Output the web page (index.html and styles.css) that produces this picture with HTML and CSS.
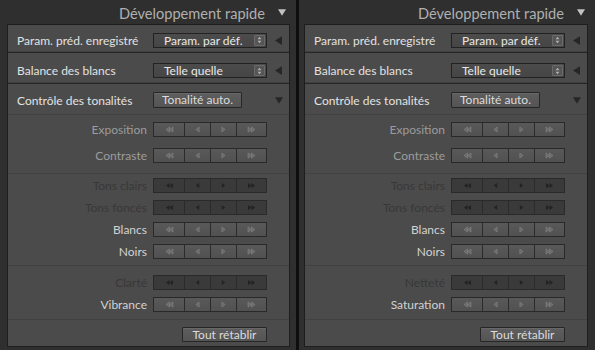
FILE: index.html
```html
<!DOCTYPE html>
<html lang="fr">
<head>
<meta charset="utf-8">
<title>Développement rapide</title>
<link rel="stylesheet" href="styles.css">
</head>
<body>
<svg width="0" height="0" class="defs">
  <defs>
    <symbol id="l1" viewBox="0 0 6 8"><path d="M5 1 L1 4 L5 7 Z"/></symbol>
    <symbol id="r1" viewBox="0 0 6 8"><path d="M1 1 L5 4 L1 7 Z"/></symbol>
    <symbol id="l2" viewBox="0 0 10 8"><path d="M5 1 L1 4 L5 7 Z M9 1 L5 4 L9 7 Z"/></symbol>
    <symbol id="r2" viewBox="0 0 10 8"><path d="M1 1 L5 4 L1 7 Z M5 1 L9 4 L5 7 Z"/></symbol>
  </defs>
</svg>
<div class="screens">

  <section class="screen">
    <div class="hdr"><span class="hdr-title">Développement rapide</span><svg class="tri-down light" viewBox="0 0 10 8"><path d="M0 0 H10 L5 8 Z"/></svg></div>
    <div class="panel">
      <div class="row row-preset">
        <span class="lbl">Param. préd. enregistré</span>
        <div class="select"><span class="sel-text">Param. par déf.</span><span class="stepper"><svg viewBox="0 0 6 10"><path d="M3 1 L5.5 4 H0.5 Z M3 9 L5.5 6 H0.5 Z"/></svg></span></div>
        <svg class="tri-left" viewBox="0 0 8 10"><path d="M8 0 V10 L0 5 Z"/></svg>
      </div>
      <div class="row row-wb">
        <span class="lbl">Balance des blancs</span>
        <div class="select"><span class="sel-text">Telle quelle</span><span class="stepper"><svg viewBox="0 0 6 10"><path d="M3 1 L5.5 4 H0.5 Z M3 9 L5.5 6 H0.5 Z"/></svg></span></div>
        <svg class="tri-left" viewBox="0 0 8 10"><path d="M8 0 V10 L0 5 Z"/></svg>
      </div>
      <div class="tone">
        <div class="tone-head">
          <span class="lbl">Contrôle des tonalités</span>
          <button class="btn btn-auto">Tonalité auto.</button>
          <svg class="tri-down dark" viewBox="0 0 10 8"><path d="M0 0 H10 L5 8 Z"/></svg>
        </div>
        <div class="grp grp-1">
          <div class="srow"><span class="slbl mid">Exposition</span><div class="steps"><span class="seg s-w"><svg class="g2"><use href="#l2"/></svg></span><span class="seg s-n"><svg class="g1"><use href="#l1"/></svg></span><span class="seg s-n"><svg class="g1"><use href="#r1"/></svg></span><span class="seg s-w"><svg class="g2"><use href="#r2"/></svg></span></div></div>
          <div class="srow"><span class="slbl mid">Contraste</span><div class="steps"><span class="seg s-w"><svg class="g2"><use href="#l2"/></svg></span><span class="seg s-n"><svg class="g1"><use href="#l1"/></svg></span><span class="seg s-n"><svg class="g1"><use href="#r1"/></svg></span><span class="seg s-w"><svg class="g2"><use href="#r2"/></svg></span></div></div>
        </div>
        <div class="grp grp-2">
          <div class="srow"><span class="slbl off">Tons clairs</span><div class="steps dark"><span class="seg s-w"><svg class="g2"><use href="#l2"/></svg></span><span class="seg s-n"><svg class="g1"><use href="#l1"/></svg></span><span class="seg s-n"><svg class="g1"><use href="#r1"/></svg></span><span class="seg s-w"><svg class="g2"><use href="#r2"/></svg></span></div></div>
          <div class="srow"><span class="slbl off">Tons foncés</span><div class="steps dark"><span class="seg s-w"><svg class="g2"><use href="#l2"/></svg></span><span class="seg s-n"><svg class="g1"><use href="#l1"/></svg></span><span class="seg s-n"><svg class="g1"><use href="#r1"/></svg></span><span class="seg s-w"><svg class="g2"><use href="#r2"/></svg></span></div></div>
          <div class="srow"><span class="slbl on">Blancs</span><div class="steps"><span class="seg s-w"><svg class="g2"><use href="#l2"/></svg></span><span class="seg s-n"><svg class="g1"><use href="#l1"/></svg></span><span class="seg s-n"><svg class="g1"><use href="#r1"/></svg></span><span class="seg s-w"><svg class="g2"><use href="#r2"/></svg></span></div></div>
          <div class="srow"><span class="slbl on">Noirs</span><div class="steps"><span class="seg s-w"><svg class="g2"><use href="#l2"/></svg></span><span class="seg s-n"><svg class="g1"><use href="#l1"/></svg></span><span class="seg s-n"><svg class="g1"><use href="#r1"/></svg></span><span class="seg s-w"><svg class="g2"><use href="#r2"/></svg></span></div></div>
        </div>
        <div class="grp grp-3">
          <div class="srow"><span class="slbl off">Clarté</span><div class="steps dark"><span class="seg s-w"><svg class="g2"><use href="#l2"/></svg></span><span class="seg s-n"><svg class="g1"><use href="#l1"/></svg></span><span class="seg s-n"><svg class="g1"><use href="#r1"/></svg></span><span class="seg s-w"><svg class="g2"><use href="#r2"/></svg></span></div></div>
          <div class="srow"><span class="slbl on">Vibrance</span><div class="steps"><span class="seg s-w"><svg class="g2"><use href="#l2"/></svg></span><span class="seg s-n"><svg class="g1"><use href="#l1"/></svg></span><span class="seg s-n"><svg class="g1"><use href="#r1"/></svg></span><span class="seg s-w"><svg class="g2"><use href="#r2"/></svg></span></div></div>
        </div>
        <div class="foot"><button class="btn btn-reset">Tout rétablir</button></div>
      </div>
    </div>
  </section>

  <section class="screen screen-b">
    <div class="hdr"><span class="hdr-title">Développement rapide</span><svg class="tri-down light" viewBox="0 0 10 8"><path d="M0 0 H10 L5 8 Z"/></svg></div>
    <div class="panel">
      <div class="row row-preset">
        <span class="lbl">Param. préd. enregistré</span>
        <div class="select"><span class="sel-text">Param. par déf.</span><span class="stepper"><svg viewBox="0 0 6 10"><path d="M3 1 L5.5 4 H0.5 Z M3 9 L5.5 6 H0.5 Z"/></svg></span></div>
        <svg class="tri-left" viewBox="0 0 8 10"><path d="M8 0 V10 L0 5 Z"/></svg>
      </div>
      <div class="row row-wb">
        <span class="lbl">Balance des blancs</span>
        <div class="select"><span class="sel-text">Telle quelle</span><span class="stepper"><svg viewBox="0 0 6 10"><path d="M3 1 L5.5 4 H0.5 Z M3 9 L5.5 6 H0.5 Z"/></svg></span></div>
        <svg class="tri-left" viewBox="0 0 8 10"><path d="M8 0 V10 L0 5 Z"/></svg>
      </div>
      <div class="tone">
        <div class="tone-head">
          <span class="lbl">Contrôle des tonalités</span>
          <button class="btn btn-auto">Tonalité auto.</button>
          <svg class="tri-down dark" viewBox="0 0 10 8"><path d="M0 0 H10 L5 8 Z"/></svg>
        </div>
        <div class="grp grp-1">
          <div class="srow"><span class="slbl mid">Exposition</span><div class="steps"><span class="seg s-w"><svg class="g2"><use href="#l2"/></svg></span><span class="seg s-n"><svg class="g1"><use href="#l1"/></svg></span><span class="seg s-n"><svg class="g1"><use href="#r1"/></svg></span><span class="seg s-w"><svg class="g2"><use href="#r2"/></svg></span></div></div>
          <div class="srow"><span class="slbl mid">Contraste</span><div class="steps"><span class="seg s-w"><svg class="g2"><use href="#l2"/></svg></span><span class="seg s-n"><svg class="g1"><use href="#l1"/></svg></span><span class="seg s-n"><svg class="g1"><use href="#r1"/></svg></span><span class="seg s-w"><svg class="g2"><use href="#r2"/></svg></span></div></div>
        </div>
        <div class="grp grp-2">
          <div class="srow"><span class="slbl off">Tons clairs</span><div class="steps dark"><span class="seg s-w"><svg class="g2"><use href="#l2"/></svg></span><span class="seg s-n"><svg class="g1"><use href="#l1"/></svg></span><span class="seg s-n"><svg class="g1"><use href="#r1"/></svg></span><span class="seg s-w"><svg class="g2"><use href="#r2"/></svg></span></div></div>
          <div class="srow"><span class="slbl off">Tons foncés</span><div class="steps dark"><span class="seg s-w"><svg class="g2"><use href="#l2"/></svg></span><span class="seg s-n"><svg class="g1"><use href="#l1"/></svg></span><span class="seg s-n"><svg class="g1"><use href="#r1"/></svg></span><span class="seg s-w"><svg class="g2"><use href="#r2"/></svg></span></div></div>
          <div class="srow"><span class="slbl on">Blancs</span><div class="steps"><span class="seg s-w"><svg class="g2"><use href="#l2"/></svg></span><span class="seg s-n"><svg class="g1"><use href="#l1"/></svg></span><span class="seg s-n"><svg class="g1"><use href="#r1"/></svg></span><span class="seg s-w"><svg class="g2"><use href="#r2"/></svg></span></div></div>
          <div class="srow"><span class="slbl on">Noirs</span><div class="steps"><span class="seg s-w"><svg class="g2"><use href="#l2"/></svg></span><span class="seg s-n"><svg class="g1"><use href="#l1"/></svg></span><span class="seg s-n"><svg class="g1"><use href="#r1"/></svg></span><span class="seg s-w"><svg class="g2"><use href="#r2"/></svg></span></div></div>
        </div>
        <div class="grp grp-3">
          <div class="srow"><span class="slbl off">Netteté</span><div class="steps dark"><span class="seg s-w"><svg class="g2"><use href="#l2"/></svg></span><span class="seg s-n"><svg class="g1"><use href="#l1"/></svg></span><span class="seg s-n"><svg class="g1"><use href="#r1"/></svg></span><span class="seg s-w"><svg class="g2"><use href="#r2"/></svg></span></div></div>
          <div class="srow"><span class="slbl on">Saturation</span><div class="steps"><span class="seg s-w"><svg class="g2"><use href="#l2"/></svg></span><span class="seg s-n"><svg class="g1"><use href="#l1"/></svg></span><span class="seg s-n"><svg class="g1"><use href="#r1"/></svg></span><span class="seg s-w"><svg class="g2"><use href="#r2"/></svg></span></div></div>
        </div>
        <div class="foot"><button class="btn btn-reset">Tout rétablir</button></div>
      </div>
    </div>
  </section>

</div>
</body>
</html>
```

FILE: styles.css
```css
* { box-sizing: border-box; }

html, body {
  margin: 0;
  padding: 0;
  background: #0e0e0e;
}

body {
  font-family: Lato, "Open Sans", "Liberation Sans", sans-serif;
  font-size: 12px;
  color: #e4e4e4;
}

.defs {
  position: absolute;
  width: 0;
  height: 0;
}

.screens {
  display: flex;
  gap: 3px;
  width: 595px;
  height: 350px;
  overflow: hidden;
}

.screen {
  width: 296px;
  height: 350px;
  background: #2f2f2f;
  display: flex;
  flex-direction: column;
  flex: none;
}

/* header */
.hdr {
  height: 24px;
  display: flex;
  align-items: center;
  justify-content: flex-end;
  padding-right: 10px;
  gap: 13px;
}

.hdr-title {
  font-size: 14.6px;
  color: #b0b0b0;
  padding-top: 2px;
}

.tri-down {
  width: 8px;
  height: 7px;
}
.tri-down.light { fill: #c2c2c2; }
.tri-down.dark { fill: #262626; }

/* panel */
.panel {
  margin-left: 7px;
  width: 283px;
  height: 323px;
  background: #4b4b4b;
  border: 1px solid #1e1e1e;
  display: flex;
  flex-direction: column;
}

.screen-b .panel {
  margin-left: 5px;
  width: 284px;
}

.row {
  display: flex;
  align-items: center;
  padding-left: 9px;
  padding-right: 7px;
  border-bottom: 1px solid #262626;
  box-shadow: inset 0 -1px 0 #404040;
}

.row-preset {
  height: 28px;
  padding-top: 3px;
}

.row-wb {
  height: 31px;
  padding-top: 5px;
}

.lbl {
  color: #e2e2e2;
  flex: 1;
  white-space: nowrap;
}

.select {
  width: 114px;
  height: 15px;
  border: 1px solid #222;
  background: linear-gradient(#4c4c4c, #454545);
  display: flex;
  align-items: center;
  padding-left: 10px;
  padding-right: 1px;
  color: #e8e8e8;
  line-height: 13px;
  margin-right: 8px;
}

.sel-text {
  flex: 1;
  white-space: nowrap;
}

.stepper {
  width: 11px;
  height: 11px;
  border: 1px solid #6a6a6a;
  border-radius: 1px;
  display: flex;
  align-items: center;
  justify-content: center;
  background: #555;
}

.stepper svg {
  width: 5px;
  height: 8px;
  fill: #b0b0b0;
}

.tri-left {
  width: 7px;
  height: 9px;
  fill: #262626;
}

/* tone section */
.tone {
  display: flex;
  flex-direction: column;
  flex: 1;
}

.tone-head {
  height: 30px;
  display: flex;
  align-items: center;
  padding-left: 9px;
  padding-right: 6px;
  padding-top: 2px;
}

.tone-head .lbl {
  flex: 1;
}

.btn {
  font-family: inherit;
  font-size: 12px;
  color: #dcdcdc;
  height: 16px;
  padding: 0;
  line-height: 14px;
  border: 1px solid #262626;
  background: linear-gradient(#5e5e5e, #545454);
  box-shadow: inset 0 1px 0 #686868;
  border-radius: 1px;
}

.btn-auto {
  width: 89px;
  margin-right: 33px;
}

.grp {
  border-top: 1px solid #414141;
  display: flex;
  flex-direction: column;
  padding-right: 22px;
}

.grp-1 { padding-top: 7px; padding-bottom: 10px; gap: 11px; }
.grp-2 { padding-top: 4px; padding-bottom: 6px; gap: 7px; }
.grp-3 { padding-top: 9px; padding-bottom: 7px; gap: 7px; }

.srow {
  display: flex;
  align-items: center;
  justify-content: flex-end;
  gap: 6px;
  height: 15px;
}

.slbl { white-space: nowrap; }
.slbl.mid { color: #9c9c9c; }
.slbl.off { color: #383838; }
.slbl.on { color: #d2d2d2; }

.steps {
  display: flex;
  width: 114px;
  height: 15px;
  border: 1px solid #292929;
  background: linear-gradient(#595959, #515151);
}

.steps.dark {
  background: #3a3a3a;
  border-color: #2a2a2a;
}

.seg {
  display: flex;
  align-items: center;
  justify-content: center;
  border-left: 1px solid #2b2b2b;
}

.seg:first-child { border-left: 0; }
.s-w { width: 30px; }
.s-n { width: 26px; }

.seg svg {
  fill: #6a6a6a;
  stroke: #8a8a8a;
  stroke-width: 0.6;
}

.steps.dark .seg svg {
  fill: #232323;
  stroke: none;
}

.g1 { width: 5px; height: 7px; }
.g2 { width: 9px; height: 7px; }

.foot {
  border-top: 1px solid #414141;
  display: flex;
  justify-content: flex-end;
  padding-right: 22px;
  padding-top: 7px;
}

.btn-reset {
  width: 85px;
  height: 15px;
}
```
